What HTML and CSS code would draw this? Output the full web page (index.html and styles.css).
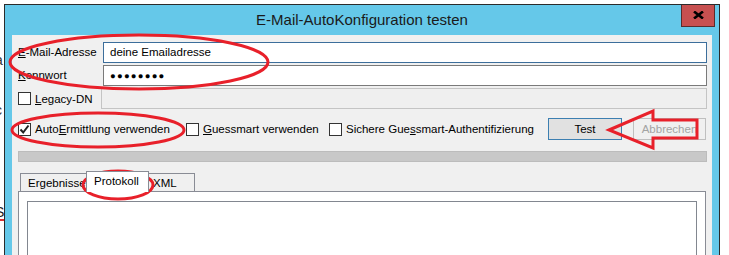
FILE: index.html
```html
<!DOCTYPE html>
<html lang="de">
<head>
  <meta charset="UTF-8">
  <title>E-Mail-AutoKonfiguration testen</title>
  <link rel="stylesheet" href="styles.css">
</head>
<body>
  <div class="desktop">
    <div class="behind">
      <span class="b1">a</span>
      <span class="b2">c</span>
      <span class="b3">S</span>
      <span class="b4">f</span>
    </div>

    <div class="window">
      <div class="titlebar">
        <span></span>
        <div class="title">E-Mail-AutoKonfiguration testen</div>
        <div class="close">
          <svg width="11" height="8" viewBox="0 0 11 8"><path d="M1 0.5 L10 7.5 M10 0.5 L1 7.5" stroke="#000" stroke-width="2.6"/></svg>
        </div>
      </div>

      <div class="content">
        <div class="row">
          <label class="lbl"><u>E</u>-Mail-Adresse</label>
          <div class="field focused">deine Emailadresse</div>
        </div>
        <div class="row">
          <label class="lbl"><u>K</u>ennwort</label>
          <div class="field"><span class="dots">●●●●●●●●</span></div>
        </div>
        <div class="row">
          <label class="check legacy"><span class="box"></span><u>L</u>egacy-DN</label>
          <div class="field disabled"></div>
        </div>

        <div class="options">
          <label class="check opt1"><span class="box"><svg width="11" height="11" viewBox="0 0 11 11"><path d="M1.5 5.5 L4.2 8.5 L9.5 1.5" fill="none" stroke="#222" stroke-width="2"/></svg></span>Auto<u>E</u>rmittlung verwenden</label>
          <label class="check opt2"><span class="box"></span><u>G</u>uessmart verwenden</label>
          <label class="check opt3"><span class="box"></span>Sichere Gue<u>s</u>smart-Authentifizierung</label>
          <button class="btn default">Test</button>
          <button class="btn disabled">Abbrechen</button>
        </div>

        <div class="progress"></div>

        <div class="tabs">
          <div class="tab first">Ergebnisse</div>
          <div class="tab active">Protokoll</div>
          <div class="tab last">XML</div>
        </div>
        <div class="panel">
          <div class="log"></div>
        </div>
      </div>
    </div>
  </div>

  <svg class="marks" width="729" height="255" viewBox="0 0 729 255">
    <ellipse cx="139" cy="62" rx="129" ry="27" fill="none" stroke="#e8202a" stroke-width="3"/>
    <ellipse cx="98" cy="130" rx="86" ry="17" fill="none" stroke="#e8202a" stroke-width="3"/>
    <ellipse cx="118" cy="185" rx="35" ry="14" fill="none" stroke="#e8202a" stroke-width="3"/>
    <polygon points="609,130 653,111 653,120 697,120 697,138 653,138 653,148" fill="none" stroke="#e8202a" stroke-width="3"/>
  </svg>
</body>
</html>
```

FILE: styles.css
```css
body {
  margin: 0;
  background: #fff;
  font-family: "Liberation Sans", Arial, sans-serif;
  font-size: 11.5px;
  color: #000;
}
.desktop {
  display: flex;
  height: 255px;
  overflow: hidden;
}
.behind {
  width: 4px;
  overflow: hidden;
  display: flex;
  flex-direction: column;
  font-size: 14px;
  line-height: 14px;
}
.behind span {
  display: block;
  margin-left: -5px;
}
.b1 { margin-top: 53px; color: #333; }
.b2 { margin-top: 36px; color: #333; }
.b3 { margin-top: 88px; color: #222; border-bottom: 2px solid #d33; }
.b4 { margin-top: 10px; color: #c86a10; }

.window {
  margin-top: 4px;
  border: 1px solid #2b2b2b;
  border-bottom: none;
  background: #65c8e9;
  padding: 0 7px;
  width: 700px;
}
.titlebar {
  height: 30px;
  display: grid;
  grid-template-columns: 1fr auto 1fr;
  margin: 0 -7px;
}
.title {
  font-size: 15px;
  line-height: 30px;
  color: #1a1a1a;
}
.close {
  justify-self: end;
  margin-right: 4px;
  width: 32px;
  height: 20px;
  background: #c75050;
  border: 1px solid #5a2c2c;
  border-top: none;
  display: flex;
  align-items: center;
  justify-content: center;
  padding-bottom: 1px;
}

.content {
  background: #f0f0f0;
  padding: 7px 5px 0 6px;
  height: 230px;
}
.row {
  display: flex;
  height: 21px;
  margin-bottom: 2px;
}
.lbl {
  width: 85px;
  line-height: 21px;
}
.field {
  flex: 1;
  background: #fff;
  border: 1px solid #7a7a7a;
  padding-left: 6px;
  line-height: 19px;
}
.field.focused {
  border-color: #3c6e9b;
}
.field.disabled {
  background: #efefef;
  border-color: #c4c4c4;
}
.dots {
  font-size: 9.5px;
  letter-spacing: 1.2px;
  vertical-align: 1px;
}
.check {
  display: flex;
  align-items: center;
  white-space: nowrap;
}
.box {
  width: 11px;
  height: 11px;
  border: 1px solid #333;
  background: #fff;
  margin-right: 4px;
  display: flex;
}
.legacy {
  width: 83px;
}

.options {
  display: flex;
  align-items: center;
  height: 22px;
  margin-top: 9px;
}
.opt1 { width: 168px; }
.opt2 { width: 143px; }
.opt3 { width: 219px; }
.btn {
  font-family: inherit;
  font-size: 11.5px;
  height: 22px;
  padding: 0;
  margin: 0;
}
.btn.default {
  width: 74px;
  background: #e1e1e1;
  border: 1px solid #3c7fb1;
  margin-right: 11px;
}
.btn.disabled {
  width: 73px;
  background: #f0f0f0;
  border: 1px solid #bfbfbf;
  color: #a3a3a3;
}

.progress {
  margin-top: 11px;
  height: 9px;
  background: #c8c8c8;
  border: 1px solid #bcbcbc;
}

.tabs {
  display: flex;
  align-items: flex-end;
  margin: 8px 0 0 2px;
  height: 21px;
}
.tab {
  height: 17px;
  line-height: 19px;
  background: #f0f0f0;
  border: 1px solid #898c95;
  border-bottom: none;
}
.tab.first {
  width: 58px;
  padding-left: 7px;
  border-right: none;
}
.tab.active {
  position: relative;
  z-index: 1;
  height: 20px;
  line-height: 19px;
  width: 54px;
  padding-left: 7px;
  background: #fff;
  margin-bottom: -1px;
}
.tab.last {
  width: 41px;
  padding-left: 4px;
  border-left: none;
}
.panel {
  margin-right: 1px;
  background: #fff;
  border: 1px solid #898c95;
  padding: 9px 8px 0 8px;
  height: 60px;
}
.log {
  height: 60px;
  border: 1px solid #828790;
  background: #fff;
}

.marks {
  position: absolute;
  left: 0;
  top: 0;
  pointer-events: none;
}
```
